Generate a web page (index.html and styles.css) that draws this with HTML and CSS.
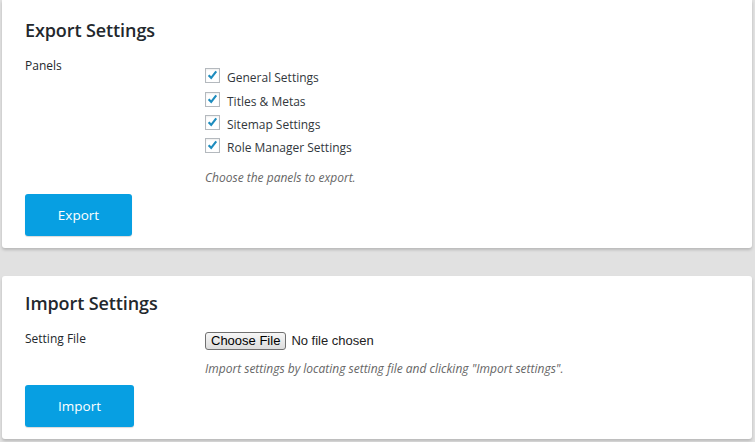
FILE: index.html
```html
<!DOCTYPE html>
<html>
<head>
<meta charset="utf-8">
<link rel="stylesheet" href="styles.css">
</head>
<body>
<div class="page">
  <section class="card card-export">
    <h2 class="title">Export Settings</h2>
    <div class="row">
      <div class="label">Panels</div>
      <div class="field field-panels">
        <ul class="checks">
          <li><span class="cb"><svg viewBox="0 0 16 16" width="14" height="14"><path d="M3.2 7.6 L6.4 10.9 L12.6 2.8" fill="none" stroke="#1e8cbe" stroke-width="2.6"/></svg></span>General Settings</li>
          <li><span class="cb"><svg viewBox="0 0 16 16" width="14" height="14"><path d="M3.2 7.6 L6.4 10.9 L12.6 2.8" fill="none" stroke="#1e8cbe" stroke-width="2.6"/></svg></span>Titles &amp; Metas</li>
          <li><span class="cb"><svg viewBox="0 0 16 16" width="14" height="14"><path d="M3.2 7.6 L6.4 10.9 L12.6 2.8" fill="none" stroke="#1e8cbe" stroke-width="2.6"/></svg></span>Sitemap Settings</li>
          <li><span class="cb"><svg viewBox="0 0 16 16" width="14" height="14"><path d="M3.2 7.6 L6.4 10.9 L12.6 2.8" fill="none" stroke="#1e8cbe" stroke-width="2.6"/></svg></span>Role Manager Settings</li>
        </ul>
        <p class="desc">Choose the panels to export.</p>
      </div>
    </div>
    <button class="btn btn-export">Export</button>
  </section>
  <section class="card card-import">
    <h2 class="title">Import Settings</h2>
    <div class="row">
      <div class="label">Setting File</div>
      <div class="field field-file">
        <div class="file"><span class="file-btn">Choose File</span><span class="file-name">No file chosen</span></div>
        <p class="desc">Import settings by locating setting file and clicking "Import settings".</p>
      </div>
    </div>
    <button class="btn btn-import">Import</button>
  </section>
</div>
</body>
</html>
```
FILE: styles.css
```css
html, body {
  margin: 0;
  padding: 0;
}
body {
  background: #e1e1e1;
  font-family: "Open Sans", "Noto Sans", sans-serif;
  color: #23282d;
  width: 755px;
  height: 442px;
  overflow: hidden;
}
.page {
  display: flex;
  flex-direction: column;
  gap: 28px;
  padding: 0 3px 0 2px;
}
.card {
  background: #fff;
  border-radius: 0 0 3px 3px;
  box-shadow: 0 2px 3px rgba(0, 0, 0, 0.18);
  padding: 0 23px 0 23px;
}
.card-import {
  border-radius: 3px;
}
.title {
  margin: 0;
  font-size: 18px;
  font-weight: 600;
  line-height: 24px;
  padding-top: 18px;
  color: #23282d;
  letter-spacing: -0.1px;
}
.row {
  display: flex;
}
.label {
  width: 180px;
  font-size: 12px;
  line-height: 18px;
  flex: none;
}
.field {
  font-size: 12px;
}
.card-export .row {
  margin-top: 11px;
}
.card-export .label {
  margin-top: 4px;
}
.checks {
  list-style: none;
  margin: 13px 0 0 0;
  padding: 0;
}
.checks li {
  display: flex;
  align-items: center;
  height: 23.4px;
  color: #32373c;
}
.cb {
  width: 15px;
  height: 15px;
  border: 1px solid #b4b9be;
  background: #fff;
  box-sizing: border-box;
  display: inline-flex;
  align-items: center;
  justify-content: center;
  margin-right: 7px;
  margin-top: -4px;
  box-shadow: inset 0 1px 2px rgba(0,0,0,0.07);
}
.cb svg {
  display: block;
  width: 13px;
  height: 13px;
}
.desc {
  margin: 0;
  font-style: italic;
  color: #666;
  font-size: 12px;
  line-height: 18px;
}
.card-export .desc {
  margin-top: 9px;
}
.btn {
  display: block;
  background: #079fe2;
  color: #fff;
  border: none;
  border-radius: 3px;
  font-family: "Open Sans", "Noto Sans", sans-serif;
  font-size: 13.5px;
  height: 42px;
  padding: 0;
  box-shadow: 0 1px 1px rgba(0,0,0,0.15);
}
.btn-export {
  width: 107px;
  margin-top: 7px;
  margin-bottom: 12px;
}
.btn-import {
  width: 109px;
  margin-top: 7px;
  margin-bottom: 12px;
}
.card-import .title {
  padding-top: 15px;
}
.card-import .row {
  margin-top: 15px;
}
.file {
  display: flex;
  align-items: center;
  margin-top: 1px;
  height: 20px;
  white-space: nowrap;
}
.file-btn {
  font-family: "Liberation Sans", Arial, sans-serif;
  font-size: 13px;
  color: #000;
  height: 18px;
  line-height: 16px;
  padding: 0 5px;
  border: 1px solid #707070;
  border-radius: 3px;
  background: linear-gradient(#f6f6f6, #dddddd);
  box-sizing: border-box;
  white-space: nowrap;
}
.file-name {
  font-family: "Liberation Sans", Arial, sans-serif;
  font-size: 13px;
  color: #222;
  margin-left: 5px;
}
.card-import .desc {
  margin-top: 9px;
}
```
